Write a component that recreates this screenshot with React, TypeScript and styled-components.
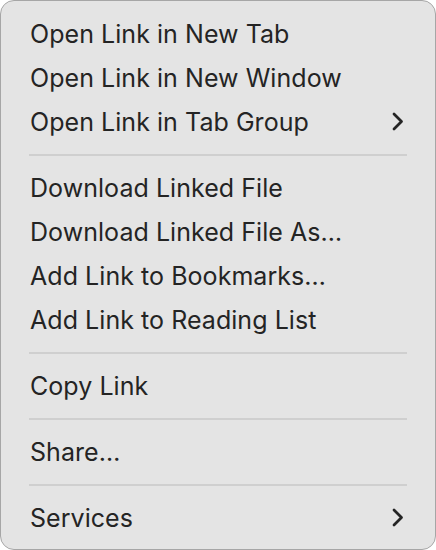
import React from "react";
import styled, { createGlobalStyle } from "styled-components";

const GlobalStyle = createGlobalStyle`
  html, body {
    margin: 0;
    padding: 0;
    background: #ffffff;
  }
  * {
    box-sizing: border-box;
  }
`;

const Menu = styled.div`
  width: 436px;
  height: 550px;
  display: flex;
  flex-direction: column;
  padding: 11px 0 9px;
  background: #e4e4e4;
  border: 1px solid #a6a6a6;
  border-radius: 14px;
  font-family: Inter, "Liberation Sans", sans-serif;
  color: #242424;
`;

const Item = styled.div`
  height: 44px;
  display: flex;
  align-items: center;
  justify-content: space-between;
  padding: 0 31px 1px 29px;
  font-size: 25px;
  letter-spacing: 0.05px;
`;

const Separator = styled.div`
  height: 22px;
  display: flex;
  align-items: center;
  padding: 0 28px;

  &::after {
    content: "";
    flex: 1;
    height: 2px;
    background: #cfcfcf;
  }
`;

const Chevron = () => (
  <svg width="12" height="19" viewBox="0 0 12 19" fill="none">
    <path
      d="M2 2 L9.5 9.5 L2 17"
      stroke="#242424"
      strokeWidth="2.8"
      strokeLinecap="round"
      strokeLinejoin="round"
    />
  </svg>
);

type Entry = { label: string; submenu?: boolean } | "sep";

const entries: Entry[] = [
  { label: "Open Link in New Tab" },
  { label: "Open Link in New Window" },
  { label: "Open Link in Tab Group", submenu: true },
  "sep",
  { label: "Download Linked File" },
  { label: "Download Linked File As…" },
  { label: "Add Link to Bookmarks…" },
  { label: "Add Link to Reading List" },
  "sep",
  { label: "Copy Link" },
  "sep",
  { label: "Share…" },
  "sep",
  { label: "Services", submenu: true },
];

export default function App() {
  return (
    <>
      <GlobalStyle />
      <Menu>
        {entries.map((e, i) =>
          e === "sep" ? (
            <Separator key={i} />
          ) : (
            <Item key={i}>
              <span>{e.label}</span>
              {e.submenu && <Chevron />}
            </Item>
          )
        )}
      </Menu>
    </>
  );
}
